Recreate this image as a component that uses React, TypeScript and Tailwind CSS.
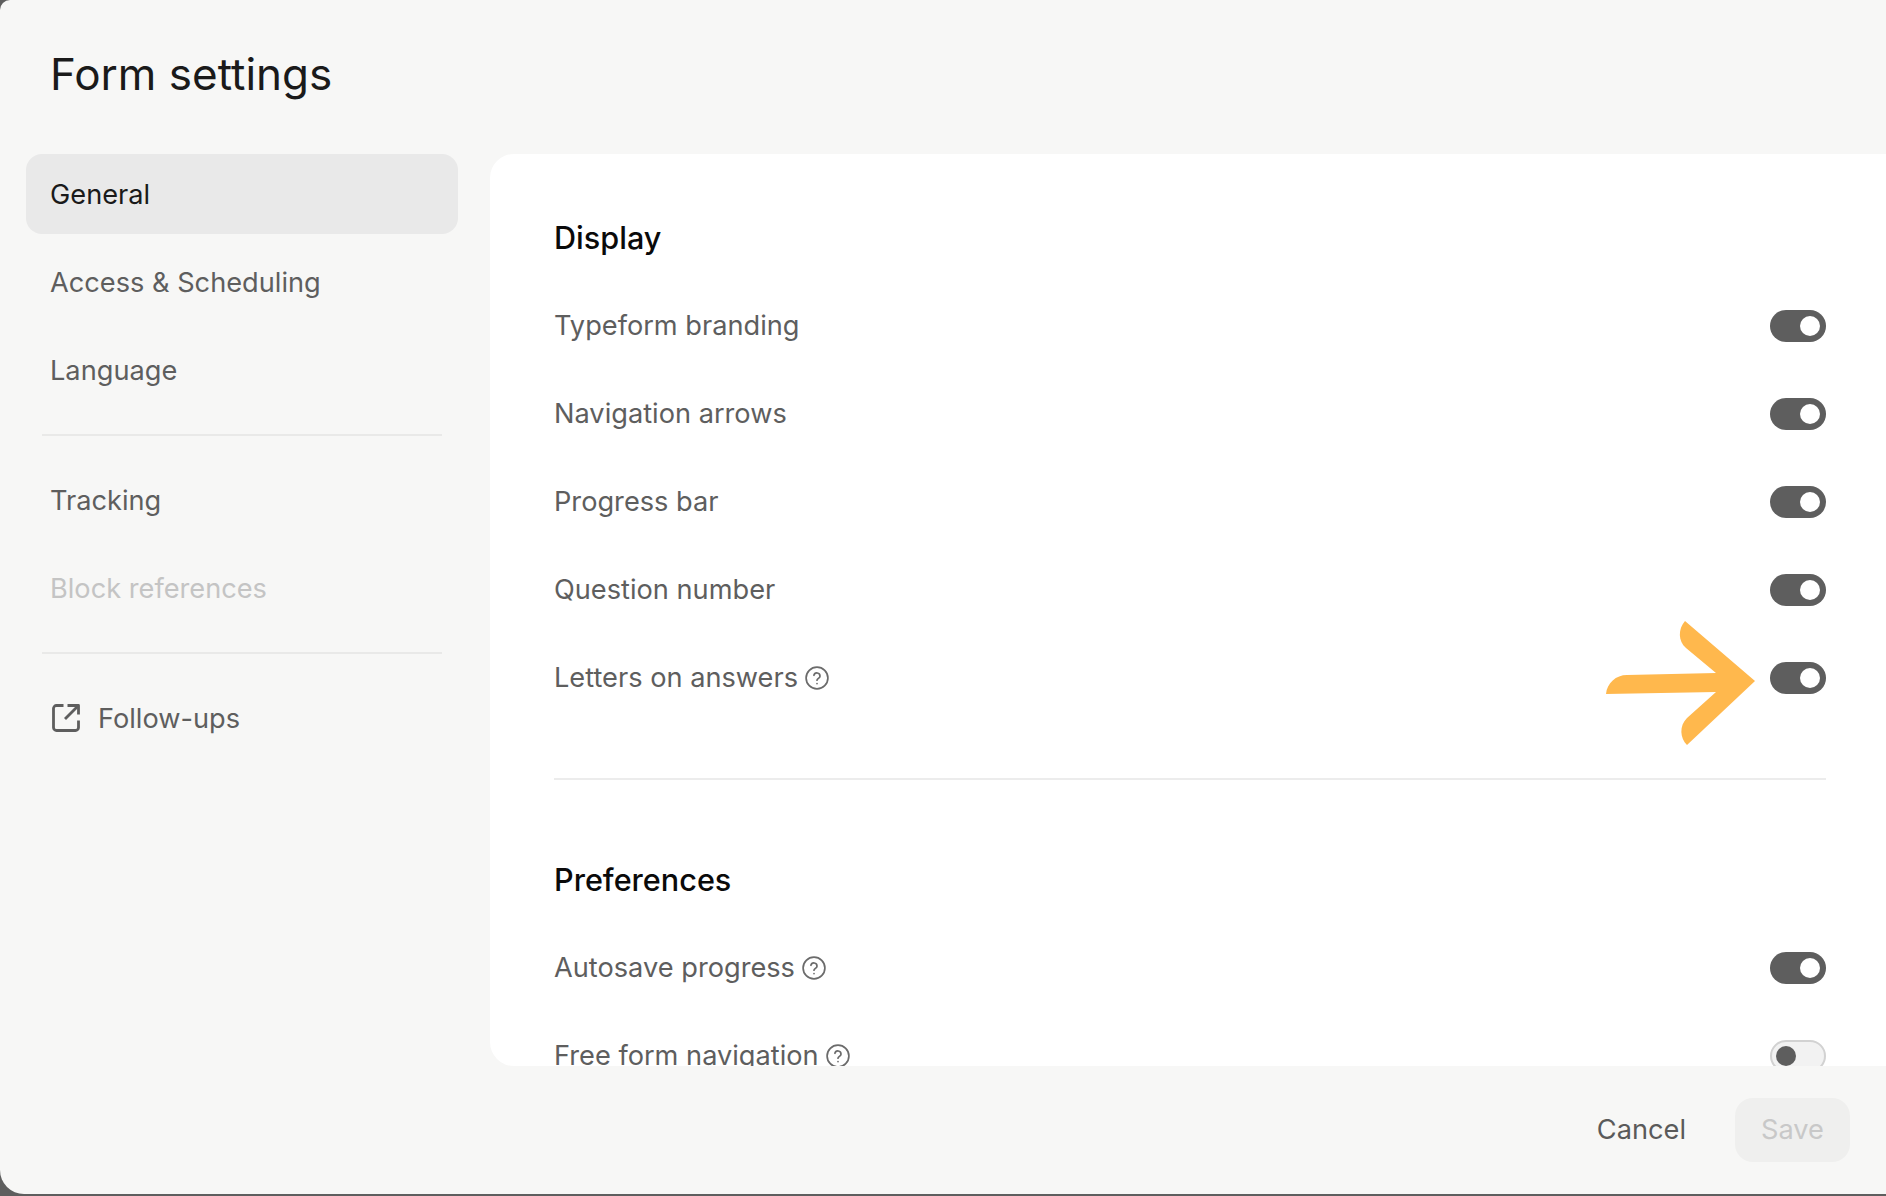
import React from "react";

function Help() {
  return (
    <svg width="24" height="24" viewBox="0 0 24 24" fill="none" stroke="#6b6b6b" strokeWidth="1.7" strokeLinecap="round" strokeLinejoin="round" className="shrink-0">
      <circle cx="12" cy="12" r="10.9" />
      <path d="M8.9 9.3a3.1 3.1 0 0 1 6.1.9c0 1.9-3 2.4-3 4" />
      <path d="M12 17.6h.01" />
    </svg>
  );
}

function Toggle({ on = true }: { on?: boolean }) {
  return on ? (
    <div className="w-[56px] h-[32px] rounded-full bg-[#5e5e5e] flex items-center justify-end pr-[6px]">
      <div className="w-[20px] h-[20px] rounded-full bg-white" />
    </div>
  ) : (
    <div className="w-[56px] h-[32px] rounded-full bg-[#f2f2f2] border-2 border-[#d2d2d2] flex items-center pl-[4px]">
      <div className="w-[20px] h-[20px] rounded-full bg-[#5e5e5e]" />
    </div>
  );
}

function Row({ label, help, on = true }: { label: string; help?: boolean; on?: boolean }) {
  return (
    <div className="h-[88px] flex items-center justify-between">
      <div className="flex items-center gap-[7px] text-[27.2px] text-[#5e5e5e]">
        <span>{label}</span>
        {help && <Help />}
      </div>
      <Toggle on={on} />
    </div>
  );
}

function Heading({ children }: { children: React.ReactNode }) {
  return <h2 className="h-[88px] flex items-center text-[30.6px] font-medium text-[#0a0a0a]">{children}</h2>;
}

function NavItem({ children, active, muted }: { children: React.ReactNode; active?: boolean; muted?: boolean }) {
  return (
    <div
      className={
        "h-[80px] rounded-[16px] px-[24px] pt-[2px] flex items-center text-[27.2px] " +
        (active ? "bg-[#e9e9e9] text-[#1a1a1a]" : muted ? "text-[#c4c4c4]" : "text-[#5e5e5e]")
      }
    >
      {children}
    </div>
  );
}

export default function App() {
  return (
    <div className="relative w-[1886px] h-[1196px] overflow-hidden bg-[#5e5e5e] font-['Inter',sans-serif]">
      <div className="h-[1194px] flex flex-col bg-[#f7f7f6] rounded-tl-[10px] rounded-bl-[24px] overflow-hidden">
        <header className="h-[154px] shrink-0 pl-[50px] pt-[48px]">
          <h1 className="text-[44px] leading-[52px] font-normal text-[#1a1a1a]">Form settings</h1>
        </header>

        <div className="h-[912px] shrink-0 flex">
          <nav className="w-[490px] shrink-0 pl-[26px] pr-[32px]">
            <div className="flex flex-col gap-[8px]">
              <NavItem active>General</NavItem>
              <NavItem>Access &amp; Scheduling</NavItem>
              <NavItem>Language</NavItem>
            </div>
            <div className="h-[2px] bg-[#e9e9e8] mx-[16px] my-[24px]" />
            <div className="flex flex-col gap-[8px]">
              <NavItem>Tracking</NavItem>
              <NavItem muted>Block references</NavItem>
            </div>
            <div className="h-[2px] bg-[#e9e9e8] mx-[16px] my-[24px]" />
            <NavItem>
              <span className="flex items-center gap-[17px] ml-[1px]">
                <svg width="30" height="30" viewBox="0 0 30 30" fill="none" stroke="#5e5e5e" strokeWidth="2.8" strokeLinejoin="round" strokeLinecap="butt" className="shrink-0 -mt-[2px]">
                  <path d="M12.5 2.5H5.5a3 3 0 0 0-3 3v19a3 3 0 0 0 3 3h19a3 3 0 0 0 3-3v-7" />
                  <path d="M16.5 2.5h11v9" />
                  <path d="M27 3 14 16" />
                </svg>
                Follow-ups
              </span>
            </NavItem>
          </nav>

          <main className="flex-1 bg-white rounded-l-[24px] overflow-hidden pl-[64px] pr-[60px] pt-[40px]">
            <Heading>Display</Heading>
            <Row label="Typeform branding" />
            <Row label="Navigation arrows" />
            <Row label="Progress bar" />
            <Row label="Question number" />
            <Row label="Letters on answers" help />
            <div className="h-[2px] bg-[#ececec] mt-[56px] mb-[56px]" />
            <Heading>Preferences</Heading>
            <Row label="Autosave progress" help />
            <Row label="Free form navigation" help on={false} />
          </main>
        </div>

        <footer className="flex-1 flex items-center justify-end pr-[36px] gap-[49px]">
          <span className="text-[27.2px] text-[#5a5a5a]">Cancel</span>
          <div className="w-[115px] h-[64px] rounded-[18px] bg-[#efefee] flex items-center justify-center text-[27.2px] text-[#c8c8c8]">
            Save
          </div>
        </footer>
      </div>

      <svg className="absolute left-[1600px] top-[615px]" width="160" height="135" viewBox="1600 615 160 135" fill="#ffb84d">
        <path d="M1606 694C1607 683 1616 675 1627 675L1716 673L1686 648C1678 641 1678 629 1685 621L1755 681L1687 745C1680 738 1679 726 1687 718L1716 692Z" />
      </svg>
    </div>
  );
}
